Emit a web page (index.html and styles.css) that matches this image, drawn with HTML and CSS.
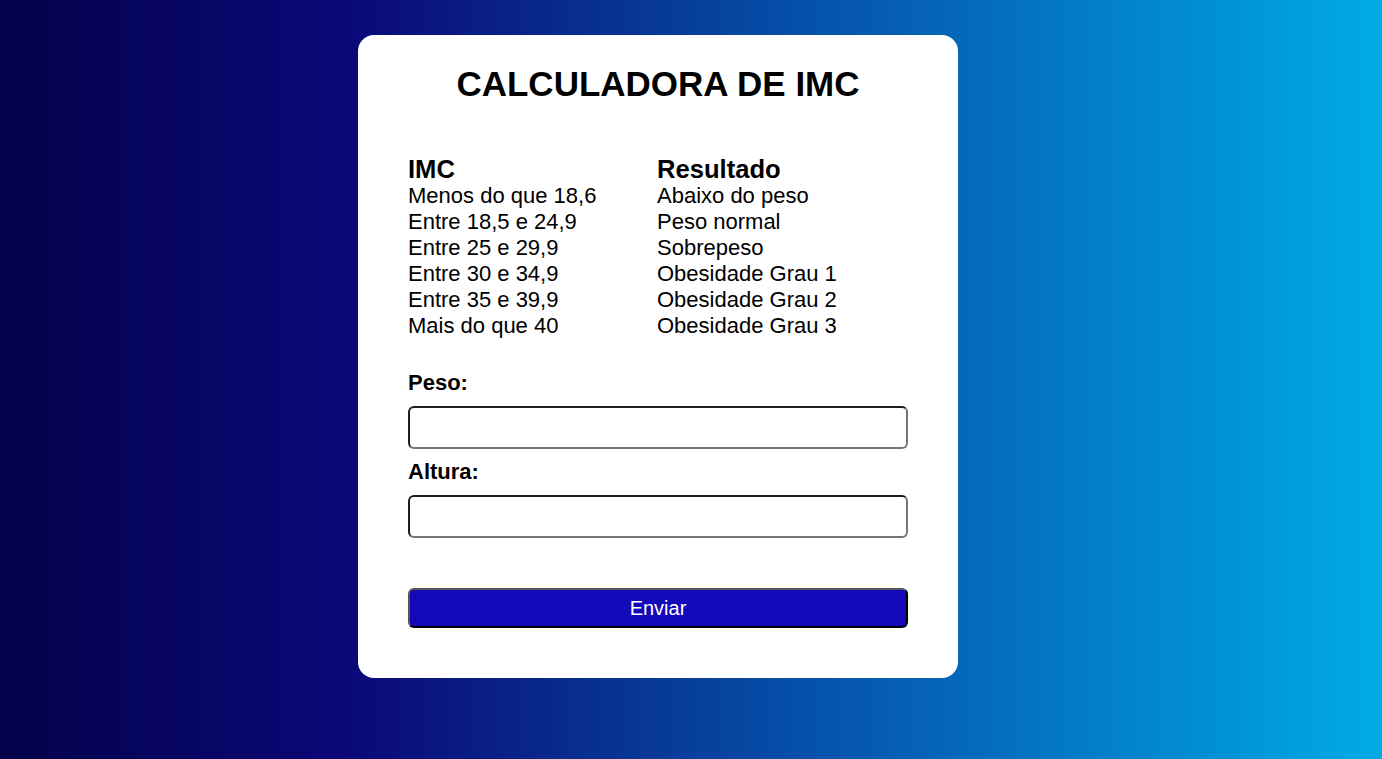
FILE: index.html
```html
<!DOCTYPE html>
<html lang="pt-BR">
<head>
<meta charset="utf-8">
<title>Calculadora de IMC</title>
<link rel="stylesheet" href="styles.css">
</head>
<body>
<main class="card">
  <h1 class="title">CALCULADORA DE IMC</h1>
  <div class="table">
    <div class="col">
      <div class="th">IMC</div>
      <div class="td">Menos do que 18,6</div>
      <div class="td">Entre 18,5 e 24,9</div>
      <div class="td">Entre 25 e 29,9</div>
      <div class="td">Entre 30 e 34,9</div>
      <div class="td">Entre 35 e 39,9</div>
      <div class="td">Mais do que 40</div>
    </div>
    <div class="col">
      <div class="th">Resultado</div>
      <div class="td">Abaixo do peso</div>
      <div class="td">Peso normal</div>
      <div class="td">Sobrepeso</div>
      <div class="td">Obesidade Grau 1</div>
      <div class="td">Obesidade Grau 2</div>
      <div class="td">Obesidade Grau 3</div>
    </div>
  </div>
  <form class="form">
    <label class="label" for="peso">Peso:</label>
    <input class="field" id="peso" type="text">
    <label class="label label-second" for="altura">Altura:</label>
    <input class="field" id="altura" type="text">
    <button class="btn" type="button">Enviar</button>
  </form>
</main>
</body>
</html>
```
FILE: styles.css
```css
html, body {
  margin: 0;
  padding: 0;
}
body {
  min-height: 100vh;
  background: linear-gradient(90deg, #03024a 0%, #0a0878 25%, #00abe5 100%);
  font-family: "Liberation Sans", Arial, sans-serif;
  color: #000;
  padding-top: 35px;
  box-sizing: border-box;
}
.card {
  width: 600px;
  box-sizing: border-box;
  margin-left: 358px;
  background: #fff;
  border-radius: 16px;
  padding: 29px 50px 50px;
}
.title {
  margin: 0;
  font-size: 35px;
  line-height: 40px;
  font-weight: bold;
  text-align: center;
}
.table {
  display: grid;
  grid-template-columns: 249px 1fr;
  margin-top: 52px;
}
.th {
  font-size: 25.6px;
  font-weight: bold;
  line-height: 26px;
  margin-bottom: 1px;
}
.td {
  font-size: 22px;
  line-height: 26px;
}
.form {
  display: flex;
  flex-direction: column;
  margin-top: 31px;
}
.label {
  font-size: 22px;
  font-weight: bold;
  line-height: 25px;
  margin-bottom: 11px;
}
.label-second {
  margin-top: 10px;
}
.field {
  display: block;
  width: 100%;
  height: 43px;
  box-sizing: border-box;
  border: 2px solid;
  border-color: #1e1e1e #767676 #767676 #1e1e1e;
  border-radius: 6px;
  background: #fff;
  font-size: 20px;
  font-family: "Liberation Sans", Arial, sans-serif;
  padding: 0 8px;
  margin: 0;
}
.btn {
  display: block;
  width: 100%;
  height: 40px;
  box-sizing: border-box;
  margin-top: 50px;
  background: #1209b8;
  color: #fff;
  border: 2px solid;
  border-color: #555 #000 #000 #555;
  border-radius: 6px;
  font-size: 20px;
  font-family: "Liberation Sans", Arial, sans-serif;
  padding: 0;
}
```
